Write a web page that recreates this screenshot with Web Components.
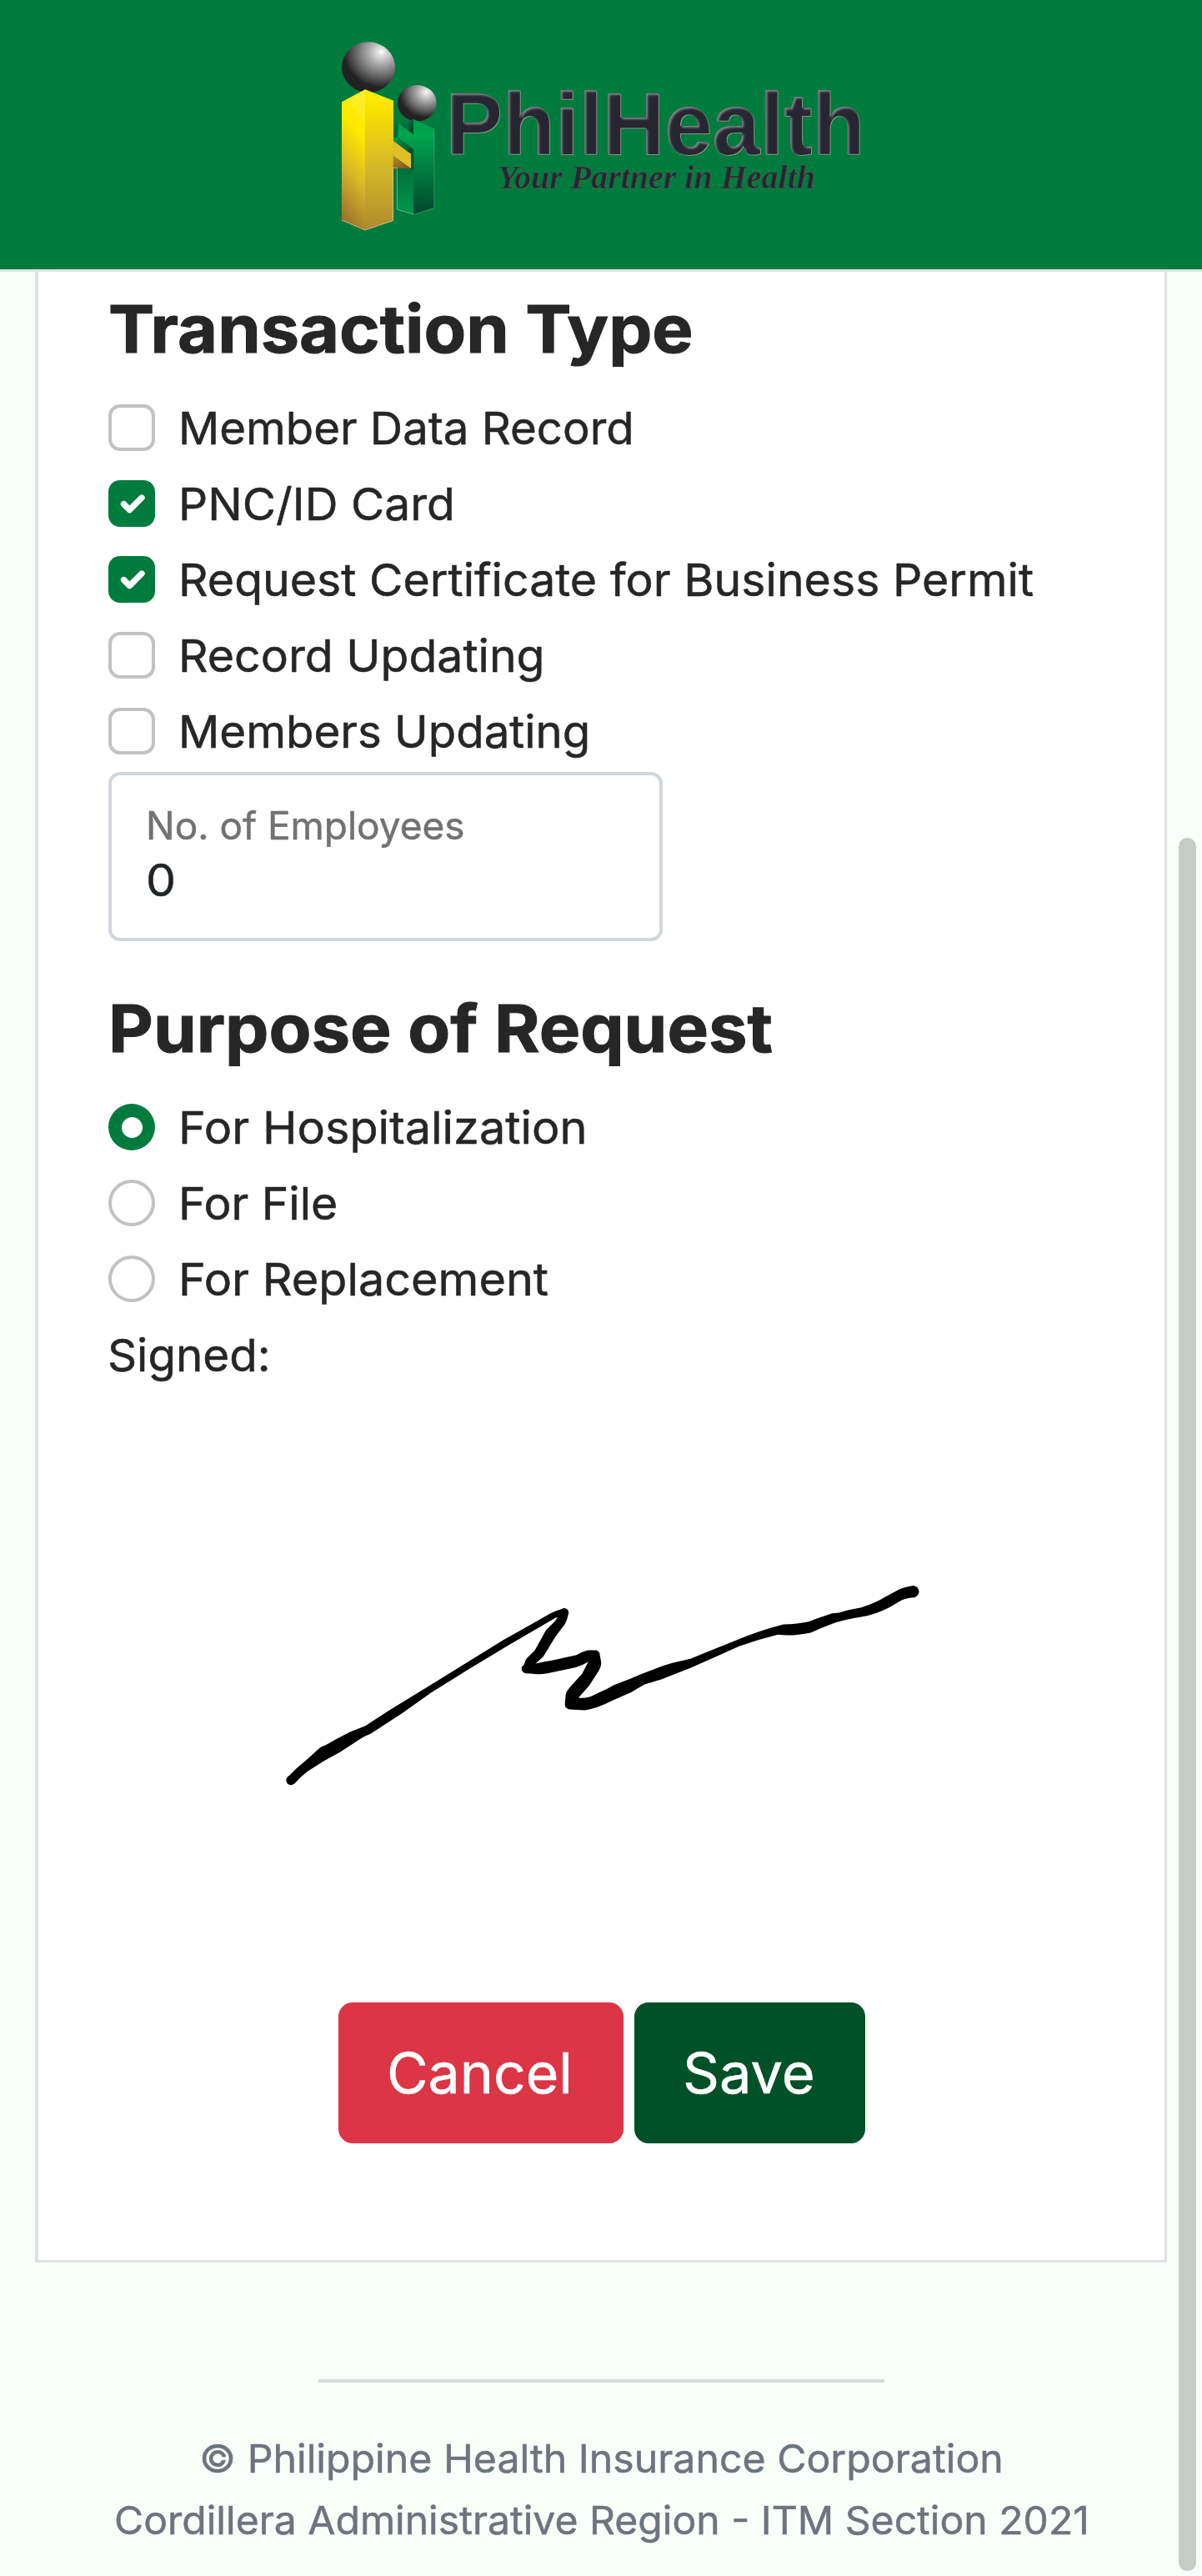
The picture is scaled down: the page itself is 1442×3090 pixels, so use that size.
<!DOCTYPE html>
<html lang="en">
<head>
<meta charset="utf-8">
<title>PhilHealth</title>
<style>
html,body{margin:0;height:3090px;overflow:hidden;background:#f8fff9}
body{font-family:Inter,"Liberation Sans",sans-serif;color:#262626}
</style>
</head>
<body>
<ph-page>
  <ph-header slot="header"></ph-header>
  <ph-card>
    <ph-heading ink="697.5" lead="2">Transaction Type</ph-heading>
    <ph-option ink="539">Member Data Record</ph-option>
    <ph-option ink="323.5" checked>PNC/ID Card</ph-option>
    <ph-option ink="1021" checked>Request Certificate for Business Permit</ph-option>
    <ph-option ink="431.5">Record Updating</ph-option>
    <ph-option ink="486.5">Members Updating</ph-option>
    <ph-field label="No. of Employees" value="0"></ph-field>
    <ph-heading ink="790.5" lead="5">Purpose of Request</ph-heading>
    <ph-option radio ink="482" checked>For Hospitalization</ph-option>
    <ph-option radio ink="184.5">For File</ph-option>
    <ph-option radio ink="439">For Replacement</ph-option>
    <ph-text size="54" line="84" ink="189" lead="2">Signed:</ph-text>
    <ph-signature></ph-signature>
    <ph-actions>
      <ph-button kind="danger" ink="214" lead="63">Cancel</ph-button>
      <ph-button ink="153" lead="62">Save</ph-button>
    </ph-actions>
  </ph-card>
  <ph-footer slot="footer"></ph-footer>
</ph-page>
<script>
const define = (name, html, setup) => customElements.define(name, class extends HTMLElement {
  connectedCallback() {
    if (this.shadowRoot) return;
    this.attachShadow({mode: 'open'}).innerHTML = html;
    if (setup) setup.call(this, this.shadowRoot);
  }
});

// Widens a line of text so that its drawn width is `ink`, starting `lead` px from the left.
const pen = document.createElement('canvas').getContext('2d');
define('ph-text', `<style>
  :host{display:block;white-space:nowrap}
  span{display:inline-block;vertical-align:top;transform-origin:0 50%;position:relative;top:1px;-webkit-text-stroke:.5px currentColor}
</style><span><slot></slot></span>`, function (root) {
  const size = +this.getAttribute('size'), weight = this.getAttribute('weight') || 400;
  const text = this.textContent.trim(), ink = +this.getAttribute('ink'), lead = +this.getAttribute('lead') || 0;
  pen.font = `${weight} ${size}px Inter, "Liberation Sans", sans-serif`;
  const m = pen.measureText(text), span = root.querySelector('span'), s = span.style;
  s.font = `${weight} ${size}px/${this.getAttribute('line')}px Inter, "Liberation Sans", sans-serif`;
  if (weight > 400) { s.webkitTextStroke = '1px currentColor'; s.top = '0'; }
  const bearings = m.width - m.actualBoundingBoxRight - m.actualBoundingBoxLeft;
  const k = ink ? ink / (span.offsetWidth - bearings) : 1.06;
  s.transform = `scaleX(${k})`;
  s.marginLeft = lead + m.actualBoundingBoxLeft * k + 'px';
});

define('ph-page', `<style>
  :host{display:flex;flex-direction:column;height:3090px;position:relative}
  main{display:block;padding:0 42px}
  .thumb{position:absolute;left:1414px;top:1005px;width:21px;height:2079px;border-radius:11px;background:#c6cbc6}
</style><slot name="header"></slot><main><slot></slot></main><slot name="footer"></slot><div class="thumb"></div>`);

define('ph-header', `<style>
  :host{display:flex;justify-content:center;box-sizing:border-box;height:326px;padding-top:30px;background:#007b3e;border-bottom:3px solid #dee2e6}
  svg{display:block}
</style>
<svg width="660" height="260" viewBox="391 30 660 260">
  <defs>
    <radialGradient id="ball" cx=".74" cy=".2" r=".85"><stop offset="0" stop-color="#fff"/><stop offset=".07" stop-color="#e4e4e4"/><stop offset=".3" stop-color="#a6a6a6"/><stop offset=".55" stop-color="#6a6a6a"/><stop offset=".82" stop-color="#222"/></radialGradient>
    <linearGradient id="yl" x1=".6" y1="0" x2=".4" y2="1"><stop offset="0" stop-color="#ffee28"/><stop offset=".14" stop-color="#ffed1c"/><stop offset=".16" stop-color="#ffea00"/><stop offset=".28" stop-color="#fde800"/><stop offset=".6" stop-color="#d8b828"/><stop offset="1" stop-color="#9c702a"/></linearGradient>
    <linearGradient id="yr" x1="0" y1="0" x2="0" y2="1"><stop offset="0" stop-color="#fff000"/><stop offset=".15" stop-color="#f8e000"/><stop offset=".5" stop-color="#d9bd26"/><stop offset="1" stop-color="#b08a2e"/></linearGradient>
    <linearGradient id="gr" x1="0" y1="0" x2="0" y2="1"><stop offset="0" stop-color="#009a49"/><stop offset=".17" stop-color="#00a54f"/><stop offset=".5" stop-color="#007f41"/><stop offset="1" stop-color="#00482a"/></linearGradient>
    <linearGradient id="gl" x1="0" y1="0" x2="0" y2="1"><stop offset="0" stop-color="#006b3a"/><stop offset="1" stop-color="#00974a"/></linearGradient>
    <linearGradient id="dk" x1="0" y1="0" x2="1" y2="1"><stop offset="0" stop-color="#00984b"/><stop offset="1" stop-color="#003c22"/></linearGradient>
    <linearGradient id="br" x1="0" y1="0" x2="1" y2="1"><stop offset="0" stop-color="#b98b30"/><stop offset="1" stop-color="#7a4a20"/></linearGradient>
    <filter id="emboss" x="-5%" y="-10%" width="110%" height="120%" color-interpolation-filters="sRGB">
      <feFlood flood-color="#282630" result="dark"/>
      <feFlood flood-color="#85838a" result="light"/>
      <feFlood flood-color="#88968e" result="rim"/>
      <feGaussianBlur in="SourceAlpha" stdDeviation="1.2"/>
      <feOffset dx="1.8" dy="2.2" result="o"/>
      <feComposite in="dark" in2="o" operator="in"/>
      <feComposite in2="SourceAlpha" operator="in" result="core"/>
      <feComposite in="light" in2="SourceAlpha" operator="in" result="face"/>
      <feOffset in="SourceAlpha" dx=".8" dy=".8" result="r"/>
      <feComposite in="rim" in2="r" operator="in" result="edge"/>
      <feMerge><feMergeNode in="edge"/><feMergeNode in="face"/><feMergeNode in="core"/></feMerge>
    </filter>
  </defs>
  <g transform="translate(390 30) scale(.33333)">
    <ellipse cx="156" cy="152" rx="96" ry="91" fill="url(#ball)"/>
    <ellipse cx="331" cy="281" rx="70" ry="65" fill="url(#ball)"/>
    <path d="M259 500H319V681L259 664Z" fill="url(#gl)" />
    <path d="M259 515V664L319 681L392 658V372" fill="none" stroke="#6ab08c" stroke-width="3"/>
    <path d="M318 339L392 372V658L319 681L318 448L262 404V352L318 393Z" fill="url(#gr)"/>
    <path d="M262 352L275 356L318 339V393Z" fill="url(#dk)"/>
    <path d="M246 360L262 352V402L246 408Z" fill="#006b38"/>
    <path d="M246 406L262 404L318 448V480L246 424Z" fill="url(#dk)"/>
    <path d="M306 462L319 450V520H306Z" fill="#00582f"/>
    <path d="M60 277L144 232V738L60 702Z" fill="url(#yl)"/>
    <path d="M144 232L246 272V704L144 738Z" fill="url(#yr)"/>
    <path d="M245 416L309 464V517L245 470Z" fill="#e0bf26"/>
    <path d="M245 470L309 517L245 514Z" fill="url(#br)"/>
    <path d="M60 702L144 738L244 704V514H260" fill="none" stroke="#d3c49a" stroke-width="2.5"/>
  </g>
  <text x="534" y="184.5" font-family="Liberation Sans" font-weight="700" font-size="106" textLength="503" lengthAdjust="spacingAndGlyphs" filter="url(#emboss)">PhilHealth</text>
  <text x="597" y="225.5" font-family="Liberation Serif" font-weight="700" font-style="italic" font-size="40" textLength="381" lengthAdjust="spacingAndGlyphs" fill="#282630" stroke="#4f6a60" stroke-width=".5">Your Partner in Health</text>
</svg>`);

define('ph-card', `<style>
  :host{display:flex;flex-direction:column;box-sizing:border-box;height:2388px;padding:19px 84px 0;background:#fff;border:solid #dee2e6;border-width:0 3px 3px 4px}
</style><slot></slot>`);

define('ph-heading', `<style>:host{display:block;height:98px;margin-bottom:28px}</style>`, function (root) {
  root.innerHTML += `<ph-text size="79" line="98" weight="700" ink="${this.getAttribute('ink')}" lead="${this.getAttribute('lead')}">${this.textContent}</ph-text>`;
});

define('ph-option', `<style>
  :host{display:flex;gap:28px;height:84px;margin-bottom:7px}
  i{box-sizing:border-box;width:56px;height:56px;margin-top:14px;border:4px solid #c2c2c2;border-radius:14px;background:#fff;display:flex;align-items:center;justify-content:center}
  :host([radio]) i{border-radius:50%}
  :host([checked]) i{background:#007b3e;border:0}
  svg{display:none;width:56px;height:56px}
  :host([checked]:not([radio])) svg{display:block}
  b{display:none;width:25px;height:25px;border-radius:50%;background:#fff}
  :host([checked][radio]) b{display:block}
</style><i><svg viewBox="0 0 20 20"><path d="M6.600 10.200l2.500 2.500l5.200-5.200" fill="none" stroke="#fff" stroke-width="2.600" stroke-linecap="round" stroke-linejoin="round"/></svg><b></b></i>`, function (root) {
  root.innerHTML += `<ph-text size="54" line="84" ink="${this.getAttribute('ink')}" lead="4">${this.textContent}</ph-text>`;
});

define('ph-field', `<style>
  :host{display:flex;flex-direction:column;gap:3px;box-sizing:border-box;width:665px;height:203px;margin-bottom:55px;padding:29px 0 0 45px;border:4px solid #d1d7dc;border-radius:14px;background:#fff}
  .label{color:#727272}.value{color:#212529}
</style>`, function (root) {
  root.innerHTML += `<ph-text class="label" size="46" line="60" ink="376.5" lead="0">${this.getAttribute('label')}</ph-text><ph-text class="value" size="54" line="66" lead="-1">${this.getAttribute('value')}</ph-text>`;
});

define('ph-signature', `<style>:host{display:block;height:735px}svg{display:block}</style>
<svg width="1190" height="735" viewBox="130 1667.5 1190 735"><g transform="translate(320 1880) scale(.33333)">
  <circle cx="87" cy="768" r="17"/><circle cx="1071" cy="164" r="15.5"/><circle cx="2327" cy="89" r="20.5"/>
  <path d="M74 758Q108 722 145 693L192 650L215 640Q255 616 300 594L355 572L440 517L570 437L700 357L850 264Q940 214 1020 168Q1045 155 1070 149L1080 178L1040 183L985 215L860 288L720 373L590 454L490 525L375 600Q350 610 335 620L265 666L205 699L145 737Q122 755 100 780Z"/>
  <path d="M1086 165L1083 180Q1080 195 1072 208L1040 250L995 323L968 348Q1000 341 1030 336L1115 317Q1135 305 1155 300L1185 300Q1199 303 1199 318L1204 345Q1204 358 1196 372L1160 428L1122 471Q1155 475 1180 460L1225 439L1250 425L1310 402L1345 387L1400 366Q1430 354 1460 346L1525 331L1600 300L1690 264Q1770 230 1860 207Q1910 206 1950 197L1980 186L2035 167L2060 165L2090 156L2140 146Q2190 131 2225 109L2275 82Q2300 70 2330 68.500L2333 110Q2305 111 2285 120L2240 146Q2190 172 2140 180Q2090 187 2045 201L1990 223L1958 237Q1890 251 1840 244Q1770 261 1700 286L1620 322L1525 364L1420 405L1360 423L1310 452L1240 483Q1190 509 1145 516L1090 513Q1073 509 1073 495L1076 460Q1078 448 1090 434L1135 385L1157 342Q1138 354 1110 362L1010 383Q980 389 950 384L930 383Q914 377 918 360L927 350Q928 338 937 328L965 300L1005 228L1038 195L1048 180Z"/>
</g></svg>`);

define('ph-actions', `<style>:host{display:flex;justify-content:center;gap:13px;height:169px}</style><slot></slot>`);

define('ph-button', `<style>
  :host{display:block;box-sizing:border-box;width:277px;height:169px;border-radius:17px;background:#005128;color:#fff;padding-top:34px}
  :host([kind=danger]){width:342px;background:#dc3545}
</style>`, function (root) {
  root.innerHTML += `<ph-text size="67.500" line="100" ink="${this.getAttribute('ink')}" lead="${this.getAttribute('lead')}">${this.textContent}</ph-text>`;
});

define('ph-footer', `<style>
  :host{display:flex;flex-direction:column;align-items:flex-start;padding-top:140px;color:#6c757d}
  hr{width:679px;height:4px;margin:0 0 53px 382px;border:0;background:#d6dbd7}
</style><hr>
<ph-text size="46.500" line="74" ink="958" lead="242">© Philippine Health Insurance Corporation</ph-text>
<ph-text size="46.500" line="74" ink="1163.500" lead="139.500">Cordillera Administrative Region - ITM Section 2021</ph-text>`);
</script>
</body>
</html>
